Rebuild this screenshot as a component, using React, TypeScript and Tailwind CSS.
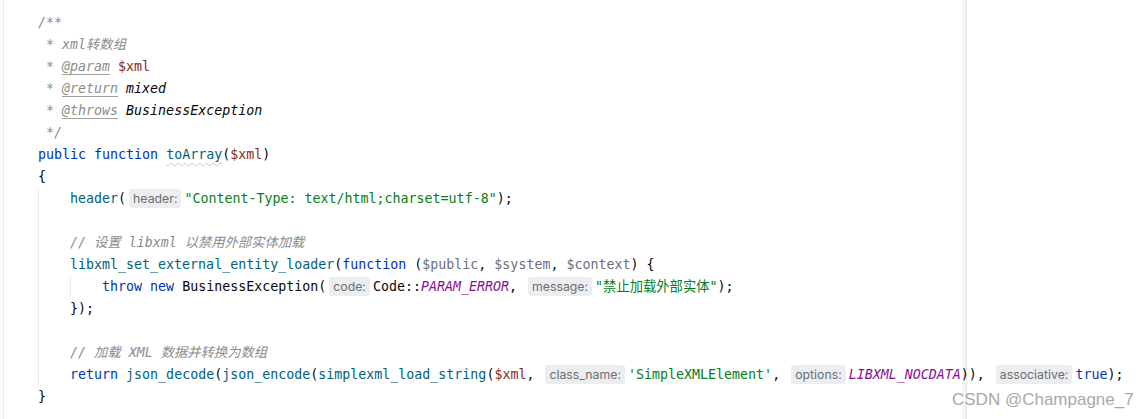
import React from "react";

const mono = { fontFamily: '"DejaVu Sans Mono", "Liberation Mono", "Noto Sans CJK SC", monospace' };

const K = ({ children }: { children: React.ReactNode }) => <span className="text-[#0033b3]">{children}</span>;
const F = ({ children }: { children: React.ReactNode }) => <span className="text-[#00627a]">{children}</span>;
const S = ({ children }: { children: React.ReactNode }) => <span className="text-[#067d17]">{children}</span>;
const V = ({ children }: { children: React.ReactNode }) => <span className="text-[#8c2a1a]">{children}</span>;
const G = ({ children }: { children: React.ReactNode }) => <span className="text-[#6c707e]">{children}</span>;
const C = ({ children }: { children: React.ReactNode }) => <span className="text-[#8c8c8c] italic">{children}</span>;
const P = ({ children }: { children: React.ReactNode }) => <span className="text-[#871094] italic">{children}</span>;
const Tag = ({ children }: { children: React.ReactNode }) => (
  <span className="underline decoration-[#a0a0a0] underline-offset-[3px]">{children}</span>
);

const Hint = ({ children }: { children: React.ReactNode }) => (
  <span
    className="inline-block align-middle not-italic mx-[3px] px-[4px] h-[19px] leading-[19px] rounded-[3px] bg-[#ebedf0] text-[#6e6e6e] text-[12.3px] -translate-y-[1px]"
    style={{ fontFamily: 'Inter, Roboto, "Noto Sans", sans-serif' }}
  >
    {children}
  </span>
);

const Line = ({ children }: { children?: React.ReactNode }) => (
  <div className="h-[22px] leading-[22px] whitespace-pre">{children ?? " "}</div>
);

export default function App() {
  return (
    <div className="relative w-[1136px] h-[419px] bg-white overflow-hidden">
      {/* left gutter edge */}
      <div className="absolute left-[3px] top-0 bottom-0 w-px bg-[#ececec]" />
      {/* right margin guide */}
      <div className="absolute left-[962px] top-0 bottom-0 w-[5px] bg-gradient-to-r from-[#fbfbfb] to-[#f0f0f0]" />
      <div className="absolute left-[966px] top-0 bottom-0 w-px bg-[#e6e6e6]" />
      {/* indent guides */}
      <div className="absolute left-[38px] top-[188px] h-[198px] w-px bg-[#ececec]" />
      <div className="absolute left-[70px] top-[276px] h-[22px] w-px bg-[#ececec]" />

      <div className="relative pl-[38px] pt-[12px] text-[13.3px] text-[#080808]" style={mono}>
        <Line><C>/**</C></Line>
        <Line><C> * xml转数组</C></Line>
        <Line><C> * <Tag>@param</Tag> </C><V>$xml</V></Line>
        <Line><C> * <Tag>@return</Tag> </C><span className="italic">mixed</span></Line>
        <Line><C> * <Tag>@throws</Tag> </C><span className="italic">BusinessException</span></Line>
        <Line><C> */</C></Line>
        <Line>
          <K>public</K> <K>function</K>{" "}
          <span className="text-[#00627a] underline decoration-wavy decoration-[#c8c8c8] decoration-1 underline-offset-[3px]">toArray</span>(<V>$xml</V>)
        </Line>
        <Line>{"{"}</Line>
        <Line>
          {"    "}<F>header</F>(<Hint>header:</Hint><S>"Content-Type: text/html;charset=utf-8"</S>);
        </Line>
        <Line />
        <Line>{"    "}<C>// 设置 libxml 以禁用外部实体加载</C></Line>
        <Line>
          {"    "}<F>libxml_set_external_entity_loader</F>(<K>function</K> (<G>$public</G>, <G>$system</G>, <G>$context</G>) {"{"}
        </Line>
        <Line>
          {"        "}<K>throw</K> <K>new</K> BusinessException(<Hint>code:</Hint>Code::<P>PARAM_ERROR</P>, <Hint>message:</Hint><S>"禁止加载外部实体"</S>);
        </Line>
        <Line>{"    "}{"});"}</Line>
        <Line />
        <Line>{"    "}<C>// 加载 XML 数据并转换为数组</C></Line>
        <Line>
          {"    "}<K>return</K> <F>json_decode</F>(<F>json_encode</F>(<F>simplexml_load_string</F>(<V>$xml</V>, <Hint>class_name:</Hint><S>'SimpleXMLElement'</S>, <Hint>options:</Hint><P>LIBXML_NOCDATA</P>)), <Hint>associative:</Hint><K>true</K>);
        </Line>
        <Line>{"}"}</Line>
      </div>

      <div
        className="absolute left-[952px] top-[389px] text-[17px] leading-[22px] text-[#a8a8a8] whitespace-nowrap"
        style={{ fontFamily: '"Liberation Sans", Arial, sans-serif' }}
      >
        CSDN @Champagne_7
      </div>
    </div>
  );
}
